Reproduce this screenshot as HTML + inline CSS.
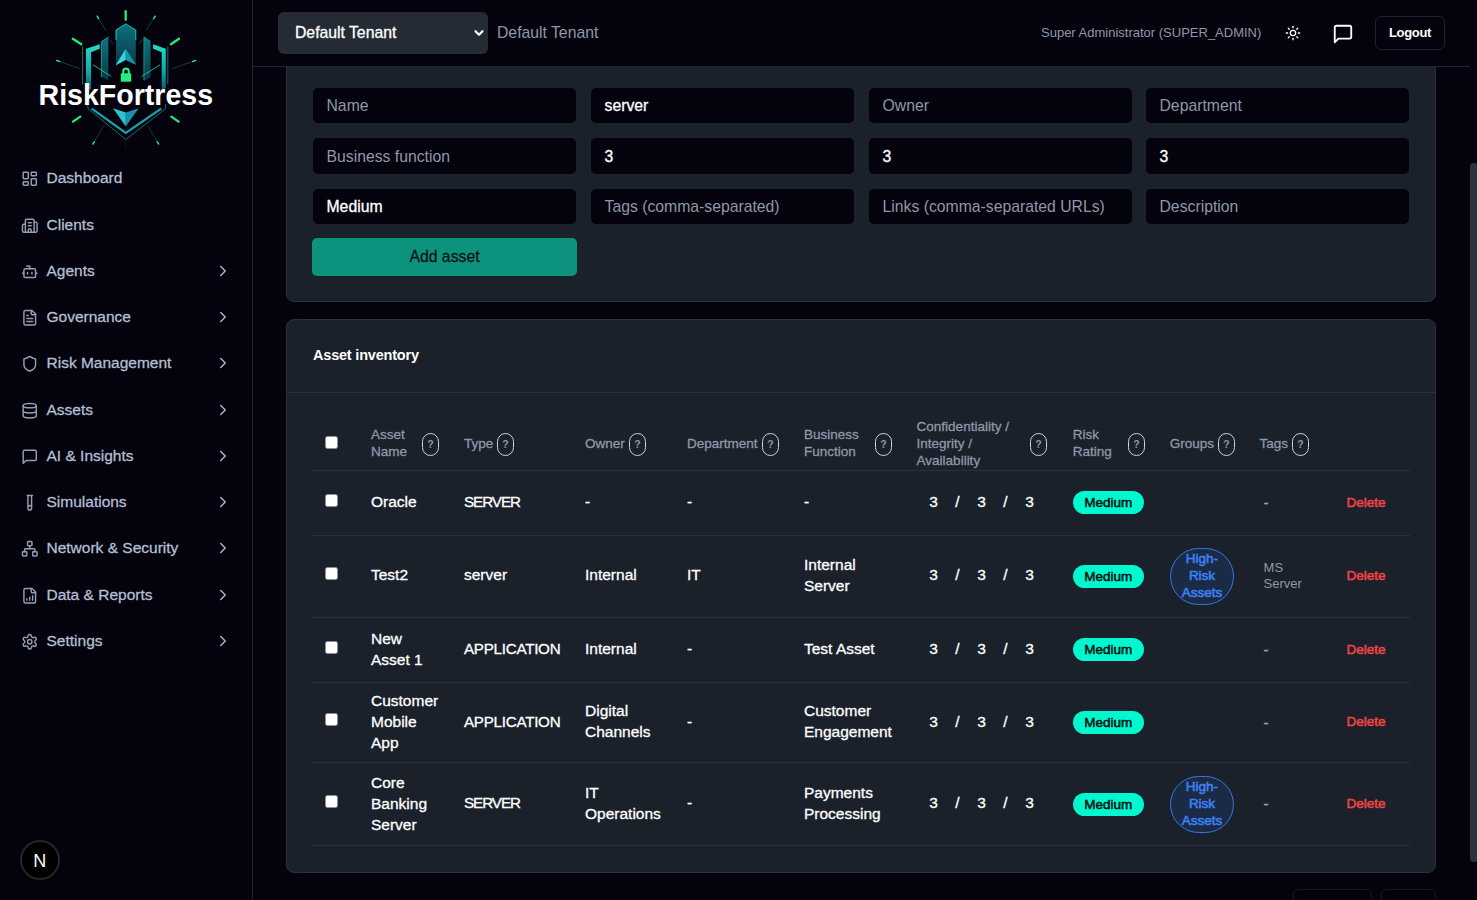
<!DOCTYPE html>
<html lang="en">
<head>
<meta charset="utf-8">
<title>RiskFortress - Assets</title>
<style>
*{box-sizing:border-box;margin:0;padding:0}
html,body{width:1477px;height:900px;overflow:hidden;background:#04020d;color:#fff;
  font-family:"Liberation Sans",Arial,sans-serif;font-size:15px;-webkit-font-smoothing:antialiased}
.abs{position:absolute}
/* ---------- sidebar ---------- */
#sidebar{position:absolute;left:0;top:0;width:253px;height:900px;background:#04020d;border-right:1px solid #1d2733}
#logo{position:absolute;left:0;top:0;width:252px;height:160px}
.nav{position:absolute;left:0;width:252px;height:24px;color:#b3bfd2;font-size:15.5px;line-height:24px;-webkit-text-stroke:.3px #b3bfd2}
.nav svg.ic{position:absolute;left:20.6px;top:3.7px;width:17.5px;height:17.5px;stroke:#939eb2;fill:none;stroke-width:2;stroke-linecap:round;stroke-linejoin:round}
.nav span{position:absolute;left:46.5px;top:0;white-space:nowrap}
.nav svg.ch{position:absolute;left:213.5px;top:3px;width:18px;height:18px;stroke:#a9b6ca;fill:none;stroke-width:2;stroke-linecap:round;stroke-linejoin:round}
#nbadge{position:absolute;left:20px;top:840px;width:40px;height:40px;border-radius:50%;background:#000;border:2px solid #262629}
/* ---------- header ---------- */
#header{z-index:10;position:absolute;left:253px;top:0;width:1217px;height:67px;border-bottom:1px solid #1d2733;background:#04020d}
#tenant{position:absolute;left:25px;top:12px;width:210px;height:41.5px;border-radius:6px;background:#242b35;color:#fff;font-size:15.75px;line-height:41px;padding-left:17px;-webkit-text-stroke:.3px #fff}
#tenant svg{position:absolute;left:194.5px;top:15px;width:12px;height:12px;stroke:#fff;fill:none;stroke-width:2.2;stroke-linecap:round;stroke-linejoin:round}
#tenant2{position:absolute;left:244px;top:12px;line-height:41px;font-size:15.75px;color:#8e98a9;white-space:nowrap}
#user{position:absolute;left:788px;top:16px;line-height:34px;font-size:13px;color:#8e98a9;white-space:nowrap}
#logout{position:absolute;left:1122px;top:16px;width:70px;height:34px;border:1px solid #1c2330;border-radius:6px;font-size:13px;font-weight:bold;line-height:32px;text-align:center;color:#fff;letter-spacing:-.3px}
/* ---------- main ---------- */
.card{position:absolute;background:#1a212a;border:1px solid #28323d;border-radius:8px}
.inp{position:absolute;height:35px;width:263px;border-radius:5px;background:#04020d;font-size:15.75px;line-height:36px;padding-left:13.5px;color:#8e98a9;white-space:nowrap;overflow:hidden}
.inp.v{color:#fff;-webkit-text-stroke:.3px #fff}
#addbtn{position:absolute;left:312px;top:238px;width:265px;height:38px;border-radius:5px;background:#0d927d;color:#081416;font-size:15.75px;line-height:37px;text-align:center;-webkit-text-stroke:.3px #081416}
#sb{position:absolute;left:1470px;top:163px;width:8px;height:699px;border-radius:4px;background:#2a333e}

/* ---------- table ---------- */
#ttl{position:absolute;left:313px;top:343px;font-size:14.5px;font-weight:bold;line-height:24px;letter-spacing:-.2px}
.hr{position:absolute;height:1px;background:#28323e}
.th{position:absolute;font-size:13.5px;line-height:17px;color:#8e98a9;white-space:nowrap;-webkit-text-stroke:.3px #8e98a9}
.q{position:absolute;width:17px;height:23px;border:1px solid #d0d4db;border-radius:9px;color:#8e98a9;font-size:10.5px;font-weight:bold;line-height:20px;text-align:center}
.cb{position:absolute;left:325px;width:13px;height:13px;border-radius:2.5px;background:#fff;border:1px solid #8f8f9a}
.td{position:absolute;font-size:15.5px;line-height:20.7px;color:#fff;white-space:nowrap;-webkit-text-stroke:.3px #fff}
.td.u1{letter-spacing:-1.05px;font-size:15.2px}
.td.u2{letter-spacing:-.27px;font-size:15.2px}
.td.g{color:#8e98a9;font-size:13px;line-height:16.2px;-webkit-text-stroke:0}
.cia{position:absolute;left:921.5px;width:120px;font-size:15.5px;line-height:20.7px;color:#fff;-webkit-text-stroke:.3px #fff}
.cia i{position:absolute;top:0;width:24px;text-align:center;font-style:normal}
.med{position:absolute;left:1072.5px;width:71.500px;height:23px;border-radius:12px;background:#00f8ce;color:#031414;font-size:13.5px;-webkit-text-stroke:.55px #031414;line-height:23.8px;text-align:center}
.grp{position:absolute;left:1170px;width:64px;height:57px;border-radius:28.5px;background:#1c2b45;border:1px solid #3577e2;color:#3b82f6;font-size:13.5px;-webkit-text-stroke:.55px #3b82f6;line-height:17px;text-align:center;padding-top:.7px}
.del{position:absolute;font-size:13.5px;-webkit-text-stroke:.55px #ef4444;line-height:17px;color:#ef4444}
</style>
</head>
<body>
<!-- SIDEBAR -->
<div id="sidebar">
  <div id="logo"><svg width="252" height="160" viewBox="0 0 252 160">
<defs>
<linearGradient id="gT" x1="0" y1="0" x2="0" y2="1"><stop offset="0" stop-color="#0f6f7d"/><stop offset="1" stop-color="#0a3a4b"/></linearGradient>
<linearGradient id="gP" x1="0" y1="0" x2="0" y2="1"><stop offset="0" stop-color="#0f7480"/><stop offset="1" stop-color="#093747"/></linearGradient>
<linearGradient id="gB" x1="0" y1="0" x2="0" y2="1"><stop offset="0" stop-color="#22dcc0"/><stop offset=".6" stop-color="#14a7ae"/><stop offset="1" stop-color="#0e8595" stop-opacity=".7"/></linearGradient>
</defs>
<g fill="none" stroke-linecap="round">
<!-- thin rays -->
<g stroke="#17966f" stroke-width=".7" opacity=".6">
<path d="M97.200 16.200 105.900 30.500M109.900 39.600 112.500 43.700M155.100 16.200 146 30.500M141.900 39.600 139.400 43.700"/>
<path d="M56.600 60.400 79.500 68.500M195.700 60.400 172.400 68.500"/>
<path d="M93 144 103.300 126.600M158.600 144 148.300 126.600"/>
<path d="M125.800 141V148" stroke="#0b3a38"/>
</g>
<g stroke="#1fe07f" stroke-width="1.500">
<path d="M97.200 16.200 98.600 18.500M155.100 16.200 153.700 18.500M56.600 60.400 59.600 61.500M195.700 60.400 192.700 61.500M93 144 94.300 141.800M158.600 144 157.300 141.800"/>
</g>
<!-- thick ticks -->
<g stroke="#1df07d" stroke-width="2.300">
<path d="M125.700 11.200V19.800"/>
<path d="M72.800 38.800 81.300 44.200M179 38.800 170.900 44.200"/>
<path d="M73 121.600 80.300 116.600M171.300 116.600 178.600 121.600"/>
</g>
<!-- outer thin verticals -->
<path d="M82.500 46.700V84M167.800 46.700V84" stroke="#0f8f8a" stroke-width=".8"/>
</g>
<!-- outer brackets -->
<polygon points="86,48.700 99.800,44.200 99.800,48.700 91.100,52.300 91.100,90 86,88" fill="url(#gB)"/>
<polygon points="153.100,44.200 165.800,48.700 165.800,88 161.700,90 161.700,52.300 153.100,48.700" fill="url(#gB)"/>
<!-- inner pillars -->
<polygon points="101.500,41.600 108.400,37 108.400,80.200 101.500,77.200" fill="url(#gP)"/>
<path d="M101.500 77V41.600L108.400 37" fill="none" stroke="#19b9aa" stroke-width=".7"/>
<polygon points="143.900,37 150.500,41.600 150.500,77.200 143.900,81" fill="url(#gP)"/>
<path d="M143.900 80V37L150.500 41.600" fill="none" stroke="#19b9aa" stroke-width=".7"/>
<!-- inner diagonals -->
<path d="M93.200 65 110.900 76.200M159.700 65 141.900 76.200" stroke="#19c98a" stroke-width=".9" fill="none" stroke-linecap="round"/>
<!-- central tower -->
<polygon points="116,30 125.700,23.900 135.800,30 135.800,64.300 125.700,59.500 116,64.800" fill="url(#gT)"/>
<path d="M116 40V30L125.700 23.900 135.800 30V40" fill="none" stroke="#1fd8b5" stroke-width=".9"/>
<polygon points="125.700,48.700 125.700,60 115.500,65.500" fill="#35d6dc"/>
<polygon points="125.700,48.700 136.300,65 125.700,60" fill="#1797ad"/>
<!-- lock -->
<rect x="120.800" y="73.200" width="10.400" height="8.600" rx="1" fill="#22ee80"/>
<path d="M123.200 74v-2.600a2.800 2.800 0 0 1 5.600 0V74" fill="none" stroke="#22ee80" stroke-width="2.100"/>
<!-- lower V -->
<path d="M91.700 108.600 125.800 133 161.200 108.600" fill="none" stroke="#15a5ad" stroke-width="2.200"/>
<path d="M87.900 104V108.600L125.800 139.500 165.700 108.600V104" fill="none" stroke="#12a08a" stroke-width=".7"/>
<polygon points="113,108.300 125.800,112.400 125.800,126.600" fill="#2ac3cf"/>
<polygon points="138.700,108.300 125.800,112.400 125.800,126.600" fill="#1a8fa8"/>
<text x="125.800" y="105" text-anchor="middle" font-family="Liberation Sans, Arial, sans-serif" font-weight="bold" font-size="30.3" fill="#fff" textLength="174.500" lengthAdjust="spacingAndGlyphs">RiskFortress</text>
</svg></div>
  <div class="nav" style="top:166px"><svg class="ic" viewBox="0 0 24 24"><rect width="7" height="9" x="3" y="3" rx="1"/><rect width="7" height="5" x="14" y="3" rx="1"/><rect width="7" height="9" x="14" y="12" rx="1"/><rect width="7" height="5" x="3" y="16" rx="1"/></svg><span>Dashboard</span></div>
<div class="nav" style="top:213px"><svg class="ic" viewBox="0 0 24 24"><path d="M10 12h4"/><path d="M10 8h4"/><path d="M14 21v-3a2 2 0 0 0-4 0v3"/><path d="M6 10H4a2 2 0 0 0-2 2v7a2 2 0 0 0 2 2h16a2 2 0 0 0 2-2V9a2 2 0 0 0-2-2h-2"/><path d="M6 21V5a2 2 0 0 1 2-2h8a2 2 0 0 1 2 2v16"/></svg><span>Clients</span></div>
<div class="nav" style="top:259px"><svg class="ic" viewBox="0 0 24 24"><path d="M12 8V4H8"/><rect width="16" height="12" x="4" y="8" rx="2"/><path d="M2 14h2"/><path d="M20 14h2"/><path d="M15 13v2"/><path d="M9 13v2"/></svg><span>Agents</span><svg class="ch" viewBox="0 0 24 24"><path d="m9 18 6-6-6-6"/></svg></div>
<div class="nav" style="top:305px"><svg class="ic" viewBox="0 0 24 24"><path d="M15 2H6a2 2 0 0 0-2 2v16a2 2 0 0 0 2 2h12a2 2 0 0 0 2-2V7Z"/><path d="M14 2v4a2 2 0 0 0 2 2h4"/><path d="M10 9H8"/><path d="M16 13H8"/><path d="M16 17H8"/></svg><span>Governance</span><svg class="ch" viewBox="0 0 24 24"><path d="m9 18 6-6-6-6"/></svg></div>
<div class="nav" style="top:351px"><svg class="ic" viewBox="0 0 24 24"><path d="M20 13c0 5-3.5 7.5-7.66 8.95a1 1 0 0 1-.67-.01C7.5 20.5 4 18 4 13V6a1 1 0 0 1 1-1c2 0 4.500-1.200 6.240-2.720a1.170 1.170 0 0 1 1.520 0C14.510 3.810 17 5 19 5a1 1 0 0 1 1 1z"/></svg><span>Risk Management</span><svg class="ch" viewBox="0 0 24 24"><path d="m9 18 6-6-6-6"/></svg></div>
<div class="nav" style="top:398px"><svg class="ic" viewBox="0 0 24 24"><ellipse cx="12" cy="5" rx="9" ry="3"/><path d="M3 5V19A9 3 0 0 0 21 19V5"/><path d="M3 12A9 3 0 0 0 21 12"/></svg><span>Assets</span><svg class="ch" viewBox="0 0 24 24"><path d="m9 18 6-6-6-6"/></svg></div>
<div class="nav" style="top:444px"><svg class="ic" viewBox="0 0 24 24"><path d="M21 15a2 2 0 0 1-2 2H7l-4 4V5a2 2 0 0 1 2-2h14a2 2 0 0 1 2 2z"/></svg><span>AI &amp; Insights</span><svg class="ch" viewBox="0 0 24 24"><path d="m9 18 6-6-6-6"/></svg></div>
<div class="nav" style="top:490px"><svg class="ic" viewBox="0 0 24 24"><path d="M14.500 2v17.500c0 1.400-1.100 2.500-2.500 2.500c-1.400 0-2.500-1.100-2.500-2.500V2"/><path d="M8.500 2h7"/><path d="M14.500 16h-5"/></svg><span>Simulations</span><svg class="ch" viewBox="0 0 24 24"><path d="m9 18 6-6-6-6"/></svg></div>
<div class="nav" style="top:536px"><svg class="ic" viewBox="0 0 24 24"><rect x="16" y="16" width="6" height="6" rx="1"/><rect x="2" y="16" width="6" height="6" rx="1"/><rect x="9" y="2" width="6" height="6" rx="1"/><path d="M5 16v-3a1 1 0 0 1 1-1h12a1 1 0 0 1 1 1v3"/><path d="M12 12V8"/></svg><span>Network &amp; Security</span><svg class="ch" viewBox="0 0 24 24"><path d="m9 18 6-6-6-6"/></svg></div>
<div class="nav" style="top:583px"><svg class="ic" viewBox="0 0 24 24"><path d="M15 2H6a2 2 0 0 0-2 2v16a2 2 0 0 0 2 2h12a2 2 0 0 0 2-2V7Z"/><path d="M14 2v4a2 2 0 0 0 2 2h4"/><path d="M8 18v-2"/><path d="M12 18v-4"/><path d="M16 18v-6"/></svg><span>Data &amp; Reports</span><svg class="ch" viewBox="0 0 24 24"><path d="m9 18 6-6-6-6"/></svg></div>
<div class="nav" style="top:629px"><svg class="ic" viewBox="0 0 24 24"><path d="M12.220 2h-.44a2 2 0 0 0-2 2v.18a2 2 0 0 1-1 1.730l-.43.250a2 2 0 0 1-2 0l-.15-.08a2 2 0 0 0-2.730.730l-.22.380a2 2 0 0 0 .73 2.730l.15.100a2 2 0 0 1 1 1.720v.51a2 2 0 0 1-1 1.740l-.15.090a2 2 0 0 0-.73 2.730l.22.380a2 2 0 0 0 2.730.730l.15-.08a2 2 0 0 1 2 0l.43.250a2 2 0 0 1 1 1.730V20a2 2 0 0 0 2 2h.44a2 2 0 0 0 2-2v-.18a2 2 0 0 1 1-1.730l.43-.250a2 2 0 0 1 2 0l.15.080a2 2 0 0 0 2.730-.730l.22-.390a2 2 0 0 0-.73-2.730l-.15-.08a2 2 0 0 1-1-1.740v-.5a2 2 0 0 1 1-1.740l.15-.09a2 2 0 0 0 .73-2.730l-.22-.380a2 2 0 0 0-2.730-.730l-.15.080a2 2 0 0 1-2 0l-.43-.250a2 2 0 0 1-1-1.730V4a2 2 0 0 0-2-2z"/><circle cx="12" cy="12" r="3"/></svg><span>Settings</span><svg class="ch" viewBox="0 0 24 24"><path d="m9 18 6-6-6-6"/></svg></div>

  <div id="nbadge"><svg width="36" height="36" viewBox="0 0 36 36" style="position:absolute;left:0;top:0"><text x="17.800" y="24.800" text-anchor="middle" font-family="Liberation Sans, Arial, sans-serif" font-size="18" fill="#fff">N</text></svg></div>
</div>

<!-- HEADER -->
<div id="header">
  <div id="tenant">Default Tenant<svg viewBox="0 0 12 12"><path d="M2.5 4.2 L6 7.8 L9.5 4.2"/></svg></div>
  <div id="tenant2">Default Tenant</div>
  <div id="user">Super Administrator (SUPER_ADMIN)</div>
  <svg style="position:absolute;left:1032px;top:25px;width:16px;height:16px;stroke:#fff;fill:none;stroke-width:2;stroke-linecap:round;stroke-linejoin:round" viewBox="0 0 24 24"><circle cx="12" cy="12" r="4"/><path d="M12 2v2"/><path d="M12 20v2"/><path d="m4.930 4.930 1.410 1.410"/><path d="m17.660 17.660 1.410 1.410"/><path d="M2 12h2"/><path d="M20 12h2"/><path d="m6.340 17.660-1.410 1.410"/><path d="m19.070 4.930-1.410 1.410"/></svg>
<svg style="position:absolute;left:1079px;top:23px;width:22px;height:22px;stroke:#fff;fill:none;stroke-width:2;stroke-linecap:round;stroke-linejoin:round" viewBox="0 0 24 24"><path d="M21 15a2 2 0 0 1-2 2H7l-4 4V5a2 2 0 0 1 2-2h14a2 2 0 0 1 2 2z"/></svg>
  <div id="logout">Logout</div>
</div>

<!-- FORM CARD -->
<div class="card" style="left:286px;top:40px;width:1150px;height:262px"></div>
<div class="inp" style="left:313px;top:88px">Name</div>
<div class="inp v" style="left:591px;top:88px">server</div>
<div class="inp" style="left:869px;top:88px">Owner</div>
<div class="inp" style="left:1146px;top:88px">Department</div>
<div class="inp" style="left:313px;top:138px;height:36px;line-height:37px">Business function</div>
<div class="inp v" style="left:591px;top:138px;height:36px;line-height:37px">3</div>
<div class="inp v" style="left:869px;top:138px;height:36px;line-height:37px">3</div>
<div class="inp v" style="left:1146px;top:138px;height:36px;line-height:37px">3</div>
<div class="inp v" style="left:313px;top:189px">Medium</div>
<div class="inp" style="left:591px;top:189px">Tags (comma-separated)</div>
<div class="inp" style="left:869px;top:189px">Links (comma-separated URLs)</div>
<div class="inp" style="left:1146px;top:189px">Description</div>
<div id="addbtn">Add asset</div>


<!-- TABLE CARD -->
<div class="card" style="left:286px;top:319px;width:1150px;height:554px"></div>
<div id="ttl">Asset inventory</div>
<div class="hr" style="left:287px;top:392px;width:1148px"></div>
<div class="hr" style="left:312px;top:470px;width:1098px"></div>
<div class="hr" style="left:312px;top:535px;width:1098px"></div>
<div class="hr" style="left:312px;top:617px;width:1098px"></div>
<div class="hr" style="left:312px;top:682px;width:1098px"></div>
<div class="hr" style="left:312px;top:762px;width:1098px"></div>
<div class="hr" style="left:312px;top:845px;width:1098px"></div>
<div class="th" style="left:371.0px;top:426.02px">Asset<br>Name</div><div class="q" style="left:422.0px;top:433.0px">?</div>
<div class="th" style="left:464.0px;top:434.52px">Type</div><div class="q" style="left:497.0px;top:433.0px">?</div>
<div class="th" style="left:585.0px;top:434.52px">Owner</div><div class="q" style="left:629.0px;top:433.0px">?</div>
<div class="th" style="left:687.0px;top:434.52px">Department</div><div class="q" style="left:762.0px;top:433.0px">?</div>
<div class="th" style="left:804.0px;top:426.02px">Business<br>Function</div><div class="q" style="left:875.0px;top:433.0px">?</div>
<div class="th" style="left:916.6px;top:417.52px">Confidentiality /<br>Integrity /<br>Availability</div><div class="q" style="left:1030.0px;top:433.0px">?</div>
<div class="th" style="left:1072.7px;top:426.02px">Risk<br>Rating</div><div class="q" style="left:1128.0px;top:433.0px">?</div>
<div class="th" style="left:1169.7px;top:434.52px">Groups</div><div class="q" style="left:1218.0px;top:433.0px">?</div>
<div class="th" style="left:1259.6px;top:434.52px">Tags</div><div class="q" style="left:1292.0px;top:433.0px">?</div>
<div class="cb" style="top:435.500px"></div>
<div class="cb" style="top:493.8px"></div><div class="td" style="left:371.0px;top:491.58px">Oracle</div><div class="td u1" style="left:464.0px;top:491.58px">SERVER</div><div class="td" style="left:585.0px;top:491.58px">-</div><div class="td" style="left:687.0px;top:491.58px">-</div><div class="td" style="left:804.0px;top:491.58px">-</div><div class="cia" style="top:491.58px"><i style="left:0">3</i><i style="left:24px">/</i><i style="left:48px">3</i><i style="left:72px">/</i><i style="left:96px">3</i></div><div class="med" style="top:491.0px">Medium</div><div class="td g" style="left:1263.6px;top:495.00px;font-size:15px;-webkit-text-stroke:.4px #97a1b1;color:#97a1b1">-</div><div class="del" style="left:1346.5px;top:493.92px">Delete</div>
<div class="cb" style="top:567.3px"></div><div class="td" style="left:371.0px;top:565.08px">Test2</div><div class="td" style="left:464.0px;top:565.08px">server</div><div class="td" style="left:585.0px;top:565.08px">Internal</div><div class="td" style="left:687.0px;top:565.08px">IT</div><div class="td" style="left:804.0px;top:555.33px">Internal<br>Server</div><div class="cia" style="top:565.08px"><i style="left:0">3</i><i style="left:24px">/</i><i style="left:48px">3</i><i style="left:72px">/</i><i style="left:96px">3</i></div><div class="med" style="top:564.5px">Medium</div><div class="grp" style="top:548.0px">High-<br>Risk<br>Assets</div><div class="td g" style="left:1263.6px;top:560.20px">MS<br>Server</div><div class="del" style="left:1346.5px;top:567.42px">Delete</div>
<div class="cb" style="top:640.8px"></div><div class="td" style="left:371.0px;top:628.83px">New<br>Asset 1</div><div class="td u2" style="left:464.0px;top:638.58px">APPLICATION</div><div class="td" style="left:585.0px;top:638.58px">Internal</div><div class="td" style="left:687.0px;top:638.58px">-</div><div class="td" style="left:804.0px;top:638.58px">Test Asset</div><div class="cia" style="top:638.58px"><i style="left:0">3</i><i style="left:24px">/</i><i style="left:48px">3</i><i style="left:72px">/</i><i style="left:96px">3</i></div><div class="med" style="top:638.0px">Medium</div><div class="td g" style="left:1263.6px;top:642.00px;font-size:15px;-webkit-text-stroke:.4px #97a1b1;color:#97a1b1">-</div><div class="del" style="left:1346.5px;top:640.92px">Delete</div>
<div class="cb" style="top:713.3px"></div><div class="td" style="left:371.0px;top:691.28px">Customer<br>Mobile<br>App</div><div class="td u2" style="left:464.0px;top:711.88px">APPLICATION</div><div class="td" style="left:585.0px;top:701.33px">Digital<br>Channels</div><div class="td" style="left:687.0px;top:711.88px">-</div><div class="td" style="left:804.0px;top:701.33px">Customer<br>Engagement</div><div class="cia" style="top:711.88px"><i style="left:0">3</i><i style="left:24px">/</i><i style="left:48px">3</i><i style="left:72px">/</i><i style="left:96px">3</i></div><div class="med" style="top:710.5px">Medium</div><div class="td g" style="left:1263.6px;top:714.50px;font-size:15px;-webkit-text-stroke:.4px #97a1b1;color:#97a1b1">-</div><div class="del" style="left:1346.5px;top:713.42px">Delete</div>
<div class="cb" style="top:794.8px"></div><div class="td" style="left:371.0px;top:773.28px">Core<br>Banking<br>Server</div><div class="td u1" style="left:464.0px;top:793.38px">SERVER</div><div class="td" style="left:585.0px;top:782.83px">IT<br>Operations</div><div class="td" style="left:687.0px;top:793.38px">-</div><div class="td" style="left:804.0px;top:782.83px">Payments<br>Processing</div><div class="cia" style="top:793.38px"><i style="left:0">3</i><i style="left:24px">/</i><i style="left:48px">3</i><i style="left:72px">/</i><i style="left:96px">3</i></div><div class="med" style="top:793.0px">Medium</div><div class="grp" style="top:775.5px;padding-top:1.5px">High-<br>Risk<br>Assets</div><div class="td g" style="left:1263.6px;top:796.00px;font-size:15px;-webkit-text-stroke:.4px #97a1b1;color:#97a1b1">-</div><div class="del" style="left:1346.5px;top:794.92px">Delete</div>


<!-- pagination stubs -->
<div class="abs" style="left:1293px;top:889px;width:79px;height:30px;border:1px solid #141a25;border-radius:6px"></div>
<div class="abs" style="left:1381px;top:889px;width:55px;height:30px;border:1px solid #141a25;border-radius:6px"></div>
<div id="sb"></div>
</body>
</html>
